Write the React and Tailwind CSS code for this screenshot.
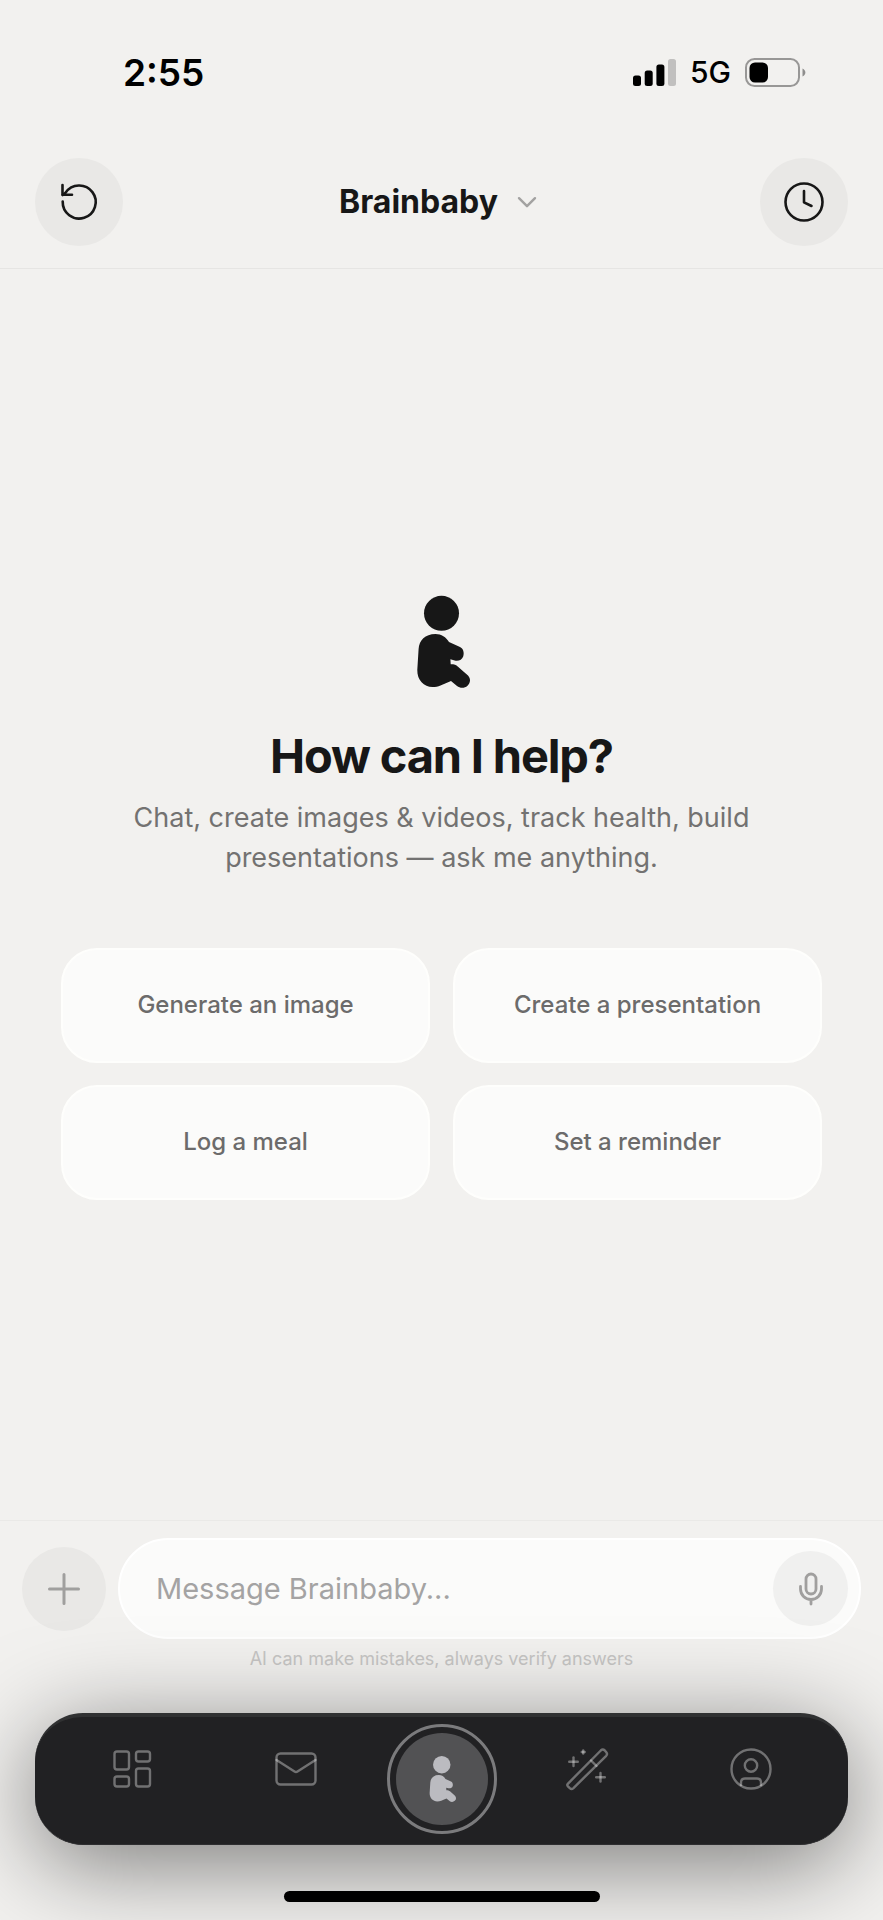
import React, { useState } from "react";

const suggestions = ["Generate an image", "Create a presentation", "Log a meal", "Set a reminder"];

const BabyIcon = ({ className }) => (
  <svg viewBox="0 0 104 104" fill="currentColor" className={className} aria-hidden="true">
    <circle cx="51.500" cy="23.300" r="17.500" />
    <path d="M45.500 44C35 44 29.200 50.500 28.600 59L27.300 80C27 90 34 97 42.500 97C45.500 97 48 96.700 50.500 95.500L61 91L67 96C70 98.400 74.500 98.600 77.500 95.700C80.800 92.500 80.800 88.500 78 85.500L68 76.700C66 74.900 64.500 74.300 60.700 74.300L60.400 69.300L64.700 70.500C68.500 71.400 72 69.800 73.200 66.500C74.500 62.500 73.200 58.500 70 57L59 52C56 47 51.500 44 45.500 44Z" />
  </svg>
);

const StatusBar = () => (
  <div className="flex h-12 items-center justify-between pl-[123px] pr-[77px] text-black">
    <span className="text-[37px] font-semibold leading-none">2:55</span>
    <div className="flex items-center">
      <svg viewBox="0 0 43 27" className="h-[27px] w-[43px]" aria-hidden="true">
        <rect x="0" y="16.500" width="8" height="10.500" rx="2.500" />
        <rect x="11.700" y="11.500" width="8" height="15.500" rx="2.500" />
        <rect x="23.400" y="5.500" width="8" height="21.500" rx="2.500" />
        <rect x="35" y="0" width="8" height="27" rx="2.500" fill="#c1c0bf" />
      </svg>
      <span className="ml-3.5 text-[30px] font-medium leading-none">5G</span>
      <svg viewBox="0 0 61 29" className="ml-3.5 h-[29px] w-[61px]" aria-hidden="true">
        <rect x="1" y="1" width="53" height="27" rx="8.500" fill="none" stroke="#989796" strokeWidth="2" />
        <rect x="4.500" y="4.500" width="18.500" height="20" rx="5.500" />
        <path d="M57.500 10.500C61.300 12.200 61.300 16.800 57.500 18.500Z" fill="#8f8e8d" />
      </svg>
    </div>
  </div>
);

const Header = () => (
  <header className="flex items-center justify-between border-b border-[#e6e5e3] px-[35px] pb-[22px] pt-[62px]">
    <button type="button" aria-label="New chat" className="flex size-[88px] items-center justify-center rounded-full bg-[#e9e8e6]">
      <svg viewBox="0 0 44 44" fill="none" stroke="currentColor" strokeWidth="2.600" strokeLinecap="round" strokeLinejoin="round" className="size-11">
        <path d="M5.700 21.500A16.500 16.500 0 1 0 8.500 12.800L5.700 15" />
        <path d="M5.500 5V14.700H15" />
      </svg>
    </button>
    <button type="button" className="flex items-center gap-3">
      <span className="text-[32px] font-bold leading-10">Brainbaby</span>
      <svg viewBox="0 0 34 34" fill="none" stroke="#a3a2a1" strokeWidth="2.400" strokeLinecap="round" strokeLinejoin="round" className="size-[34px]">
        <path d="M9 13.200L17 21.200L25 13.200" />
      </svg>
    </button>
    <button type="button" aria-label="History" className="flex size-[88px] items-center justify-center rounded-full bg-[#e9e8e6]">
      <svg viewBox="0 0 44 44" fill="none" stroke="currentColor" strokeWidth="2.600" strokeLinecap="round" strokeLinejoin="round" className="size-11">
        <circle cx="22" cy="22" r="18.500" />
        <path d="M22 11V22.300L29.500 26" />
      </svg>
    </button>
  </header>
);

const navIcon = "size-12 fill-none stroke-white/36 stroke-[2.4px]";

const BottomNav = () => (
  <nav className="relative mx-[35px] mt-[42px] flex h-[132px] items-center rounded-[48px] border-b border-t-4 border-b-[#2e2e30] border-t-[#303132] bg-[#212123] px-[15px] pb-[3px] shadow-[0_18px_96px_rgba(0,0,0,0.5)]">
    <a href="#dashboard" aria-label="Dashboard" className="flex flex-1 justify-center pb-5">
      <svg viewBox="0 0 48 48" className={navIcon}>
        <rect x="6.500" y="6.500" width="14.500" height="18" rx="2.500" />
        <rect x="28" y="6.500" width="14" height="10" rx="2.500" />
        <rect x="6.500" y="31.500" width="14.500" height="10" rx="2.500" />
        <rect x="28" y="23.500" width="14" height="18" rx="2.500" />
      </svg>
    </a>
    <a href="#mail" aria-label="Mail" className="flex flex-1 justify-center pb-5">
      <svg viewBox="0 0 48 48" strokeLinecap="round" strokeLinejoin="round" className={navIcon}>
        <rect x="4.500" y="8.500" width="39" height="31" rx="4" />
        <path d="M4.500 15L22.500 26.500Q24 27.500 25.500 26.500L43.500 15" />
      </svg>
    </a>
    <div className="flex w-[127px] justify-center">
      <a href="#chat" aria-label="Chat" aria-current="page" className="flex size-[110px] items-center justify-center rounded-full border-[3px] border-[#7b7b7d]">
        <span className="flex size-[92px] items-center justify-center rounded-full bg-[#525254]">
          <BabyIcon className="size-[52px] text-[#bbbbc0]" />
        </span>
      </a>
    </div>
    <a href="#create" aria-label="Create" className="flex flex-1 justify-center pb-5">
      <svg viewBox="0 0 48 48" strokeLinecap="round" strokeLinejoin="round" className={navIcon}>
        <path d="M4.800 38.800L37.800 5.500Q39.800 3.700 41.800 5.500L43.300 7.200Q44.800 9 43.200 10.800L10.200 43.300Q8.500 44.800 6.800 43.200L4.900 41.300Q3.600 40 4.800 38.800Z" />
        <path d="M28 15.500L33.500 21" />
        <path d="M10.500 12.500V21" />
        <path d="M6.200 16.800H14.800" />
        <path d="M37.500 28V36.500" />
        <path d="M33.200 32.200H41.800" />
        <path d="M20.200 5.500V8.500" />
        <path d="M18.700 7H21.700" />
      </svg>
    </a>
    <a href="#profile" aria-label="Profile" className="flex flex-1 justify-center pb-5">
      <svg viewBox="0 0 48 48" strokeLinecap="round" className={navIcon}>
        <circle cx="24" cy="24" r="19.500" />
        <circle cx="24" cy="20.500" r="6.200" />
        <path d="M14 40V37.500Q14 33.500 18 33.500H30Q34 33.500 34 37.500V40" />
      </svg>
    </a>
  </nav>
);

const App = () => {
  const [message, setMessage] = useState("");

  return (
    <div className="flex min-h-screen flex-col overflow-hidden bg-[#f2f1ef] pt-12 font-['Inter',sans-serif] text-[#171717]">
      <StatusBar />
      <Header />

      <main className="flex flex-1 flex-col items-center justify-center px-[61px]">
        <BabyIcon className="size-[104px]" />
        <h1 className="mt-[34px] text-center text-[47px] font-bold leading-[56px] tracking-tight">How can I help?</h1>
        <p className="mt-3.5 max-w-[680px] text-center text-[27px] leading-10 text-[#737271]">
          Chat, create images & videos, track health, build presentations — ask me anything.
        </p>
        <div className="mt-[70px] grid w-full grid-cols-2 gap-x-[23px] gap-y-[22px]">
          {suggestions.map((label) => (
            <button
              key={label}
              type="button"
              onClick={() => setMessage(label)}
              className="h-[115px] rounded-[36px] border-2 border-[#fefefc] bg-[#fbfbfa] text-2xl font-medium text-[#6c6b6b]"
            >
              {label}
            </button>
          ))}
        </div>
      </main>

      <footer className="flex flex-col border-t border-[#eae9e7] pb-[18px] pt-[17px]">
        <form className="flex items-center gap-3 px-[22px]" onSubmit={(e) => e.preventDefault()}>
          <button type="button" aria-label="Add attachment" className="flex size-[84px] shrink-0 items-center justify-center rounded-full bg-[#e9e8e6]">
            <svg viewBox="0 0 36 36" fill="none" stroke="#a09f9e" strokeWidth="3" strokeLinecap="round" className="size-9">
              <path d="M18 3.500V32.500M3.500 18H32.500" />
            </svg>
          </button>
          <div className="flex h-[101px] min-w-0 flex-1 items-center rounded-full border-2 border-white bg-[#fbfbfa] pl-9 pr-[11px]">
            <input
              type="text"
              aria-label="Message Brainbaby"
              placeholder="Message Brainbaby..."
              value={message}
              onChange={(e) => setMessage(e.target.value)}
              className="min-w-0 flex-1 bg-transparent text-[29px] leading-10 outline-none placeholder:text-[#a4a3a3]"
            />
            <button type="button" aria-label="Voice input" className="flex size-[75px] shrink-0 items-center justify-center rounded-full bg-[#f0f0ef]">
              <svg viewBox="0 0 36 36" fill="none" stroke="#a09f9e" strokeWidth="2.800" strokeLinecap="round" strokeLinejoin="round" className="size-9">
                <rect x="13" y="3" width="10" height="20" rx="5" />
                <path d="M7.500 15.500V18A10.500 10.500 0 0 0 28.500 18V15.500M18 28.500V33" />
              </svg>
            </button>
          </div>
        </form>
        <p className="mt-2 text-center text-lg leading-6 text-[#c6c5c4]">AI can make mistakes, always verify answers</p>
        <BottomNav />
        <div className="relative mt-[46px] h-[11px] w-[316px] self-center rounded-full bg-black" />
      </footer>
    </div>
  );
};

export default App;
